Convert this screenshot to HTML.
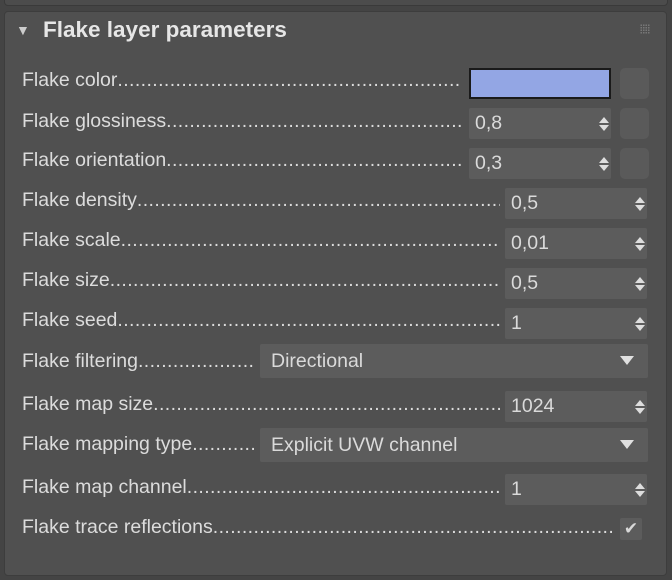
<!DOCTYPE html>
<html><head><style>
body{margin:0;width:672px;height:580px;background:#444;overflow:hidden;font-family:"Liberation Sans",sans-serif;}
.top{position:absolute;left:4px;top:-6px;width:662px;height:10px;background:#4c4c4c;border:1px solid #3a3a3a;border-radius:4px;}
.panel{position:absolute;left:4px;top:11px;width:661px;height:563px;background:#505050;border-radius:4px;border:1px solid #3d3d3d;}
.t{position:absolute;color:#e6e6e6;font-size:19px;white-space:nowrap;}
.lbl{position:absolute;left:22px;color:#dcdcdc;font-size:19.5px;white-space:nowrap;overflow:hidden;line-height:24px;}
.lbl i{font-style:normal;letter-spacing:0.4px;}
.f{position:absolute;background:#5c5c5c;border-radius:2px;color:#dadada;font-size:19.5px;line-height:30px;padding-left:6px;box-sizing:border-box;}
.sp{position:absolute;right:7px;top:9px;width:0;height:0;}
.sp:before{content:"";position:absolute;left:-5px;top:0;border-left:5px solid transparent;border-right:5px solid transparent;border-bottom:6px solid #ddd;}
.sp:after{content:"";position:absolute;left:-5px;top:8px;border-left:5px solid transparent;border-right:5px solid transparent;border-top:6px solid #ddd;}
.dd:after{content:"";position:absolute;right:14px;top:12px;border-left:7px solid transparent;border-right:7px solid transparent;border-top:9px solid #e0e0e0;}
.sq{position:absolute;left:620px;width:29px;height:31px;background:#5a5a5a;border-radius:5px;}
</style></head><body>
<div class="top"></div>
<div class="panel"></div>
<div class="t" style="left:16px;top:22px;font-size:14px;color:#ccc;">▼</div>
<div class="t" style="left:43px;top:17px;font-weight:bold;font-size:22.5px;">Flake layer parameters</div>
<div style="position:absolute;left:640px;top:24px;width:10px;height:10px;background-image:radial-gradient(#777 0.8px,transparent 1px);background-size:2.5px 2.5px;"></div>

<div class="lbl" style="top:68px;width:440px">Flake color<i>.........................................................................</i></div>
<div style="position:absolute;left:469px;top:68px;width:142px;height:31px;background:#93a6e4;border:2px solid #1a1a1a;box-sizing:border-box;"></div>
<div class="sq" style="top:68px"></div>

<div class="lbl" style="top:109px;width:442px">Flake glossiness<i>...............................................................</i></div>
<div class="f" style="left:469px;top:108px;width:142px;height:31px">0,8<span class="sp"></span></div>
<div class="sq" style="top:108px"></div>

<div class="lbl" style="top:148px;width:442px">Flake orientation<i>...............................................................</i></div>
<div class="f" style="left:469px;top:148px;width:142px;height:31px">0,3<span class="sp"></span></div>
<div class="sq" style="top:148px"></div>

<div class="lbl" style="top:188px;width:478px">Flake density<i>.........................................................................</i></div>
<div class="f" style="left:505px;top:188px;width:142px;height:31px">0,5<span class="sp"></span></div>
<div class="lbl" style="top:228px;width:478px">Flake scale<i>...............................................................................</i></div>
<div class="f" style="left:505px;top:228px;width:142px;height:31px">0,01<span class="sp"></span></div>
<div class="lbl" style="top:268px;width:478px">Flake size<i>.................................................................................</i></div>
<div class="f" style="left:505px;top:268px;width:142px;height:31px">0,5<span class="sp"></span></div>
<div class="lbl" style="top:308px;width:478px">Flake seed<i>...............................................................................</i></div>
<div class="f" style="left:505px;top:308px;width:142px;height:31px">1<span class="sp"></span></div>

<div class="lbl" style="top:349px;width:234px">Flake filtering<i>.......................................</i></div>
<div class="f dd" style="left:260px;top:344px;width:388px;height:34px;line-height:34px;padding-left:11px">Directional</div>

<div class="lbl" style="top:392px;width:478px">Flake map size<i>........................................................................</i></div>
<div class="f" style="left:505px;top:391px;width:142px;height:31px">1024<span class="sp"></span></div>

<div class="lbl" style="top:432px;width:234px">Flake mapping type<i>.........................</i></div>
<div class="f dd" style="left:260px;top:428px;width:388px;height:34px;line-height:34px;padding-left:11px">Explicit UVW channel</div>

<div class="lbl" style="top:475px;width:478px">Flake map channel<i>.................................................................</i></div>
<div class="f" style="left:505px;top:474px;width:142px;height:31px">1<span class="sp"></span></div>

<div class="lbl" style="top:515px;width:592px">Flake trace reflections<i>..........................................................................................</i></div>
<div style="position:absolute;left:620px;top:518px;width:22px;height:22px;background:#5c5c5c;border-radius:2px;color:#d8d8d8;font-size:17px;line-height:22px;text-align:center;">✔</div>
</body></html>
